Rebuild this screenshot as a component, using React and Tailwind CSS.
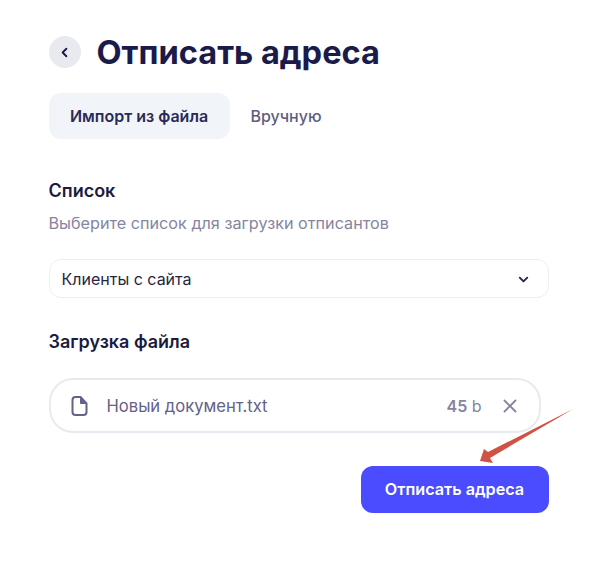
import React from "react";
import { ChevronLeft, ChevronDown, X } from "lucide-react";

const App = () => {
  return (
    <div className="relative w-[589px] h-[565px] bg-white overflow-hidden font-['Inter',sans-serif] pl-[48.5px] pt-[36px] pr-[40px]">
      {/* Header */}
      <div className="flex items-center gap-[16px] h-[32px]">
        <button className="w-[32px] h-[32px] rounded-full bg-[#e9eaf0] flex items-center justify-center text-[#1b1b4b]">
          <ChevronLeft size={15} strokeWidth={3} />
        </button>
        <h1 className="text-[32.6px] leading-[32px] font-bold text-[#1b1b4b] whitespace-nowrap">
          Отписать адреса
        </h1>
      </div>

      {/* Tabs */}
      <div className="flex items-center mt-[25px]">
        <div className="w-[181px] h-[46px] rounded-[12px] bg-[#f1f4f9] flex items-center justify-center text-[16px] font-semibold text-[#2b2b55]">
          Импорт из файла
        </div>
        <div className="ml-[21px] text-[16px] font-medium text-[#5d5d80]">
          Вручную
        </div>
      </div>

      {/* Список */}
      <div className="mt-[40px] text-[18px] leading-[24px] font-semibold text-[#1b1b3f]">
        Список
      </div>
      <div className="mt-[9px] text-[16.2px] leading-[22px] text-[#85859f] whitespace-nowrap">
        Выберите список для загрузки отписантов
      </div>
      <div className="mt-[25px] w-[500px] h-[39px] rounded-[12px] border border-[#eceef3] flex items-center justify-between pl-[12px] pr-[17px] text-[16px] text-[#26263f]">
        <span className="pt-[1px]">Клиенты с сайта</span>
        <ChevronDown size={15} strokeWidth={3} className="mt-[1px]" />
      </div>

      {/* Загрузка файла */}
      <div className="mt-[32px] text-[18px] leading-[24px] font-semibold text-[#1b1b3f]">
        Загрузка файла
      </div>
      <div className="mt-[24px] w-[492px] h-[55px] rounded-[24px] border-2 border-[#e9e9f1] flex items-center pl-[19px] pr-[18px]">
        {/* file icon with filled fold */}
        <svg width="20" height="20" viewBox="0 0 20 20" fill="none" className="text-[#62628a]">
          <path
            d="M2.5 4C2.5 2.3 3.8 1 5.5 1H10.5L16.5 7.5V16C16.5 17.7 15.2 19 13.5 19H5.5C3.8 19 2.5 17.7 2.5 16V4Z"
            stroke="currentColor"
            strokeWidth="2"
            strokeLinejoin="round"
          />
          <path d="M10.5 1V7.5H16.5Z" fill="currentColor" stroke="currentColor" strokeWidth="1" strokeLinejoin="round" />
        </svg>
        <span className="ml-[17px] text-[16.6px] text-[#62628a] pt-[1px]">
          Новый документ.txt
        </span>
        <span className="ml-auto text-[16px] text-[#85859f] pt-[1px]">
          <span className="font-semibold">45</span> b
        </span>
        <X size={22} strokeWidth={2} className="ml-[17px] text-[#85859f]" />
      </div>

      {/* Submit */}
      <div className="mt-[33px] w-[500px] flex justify-end">
        <button className="w-[188px] h-[47px] rounded-[12px] bg-[#4b4bff] text-white text-[16.2px] font-semibold">
          Отписать адреса
        </button>
      </div>

      {/* Annotation arrow */}
      <svg className="absolute left-[470px] top-[405px]" width="110" height="65" viewBox="0 0 110 65">
        <path d="M103 4 L18 47 L14 44 L10 56 L23 58 L20 53 Z" fill="#cf5244" />
      </svg>
    </div>
  );
};

export default App;
